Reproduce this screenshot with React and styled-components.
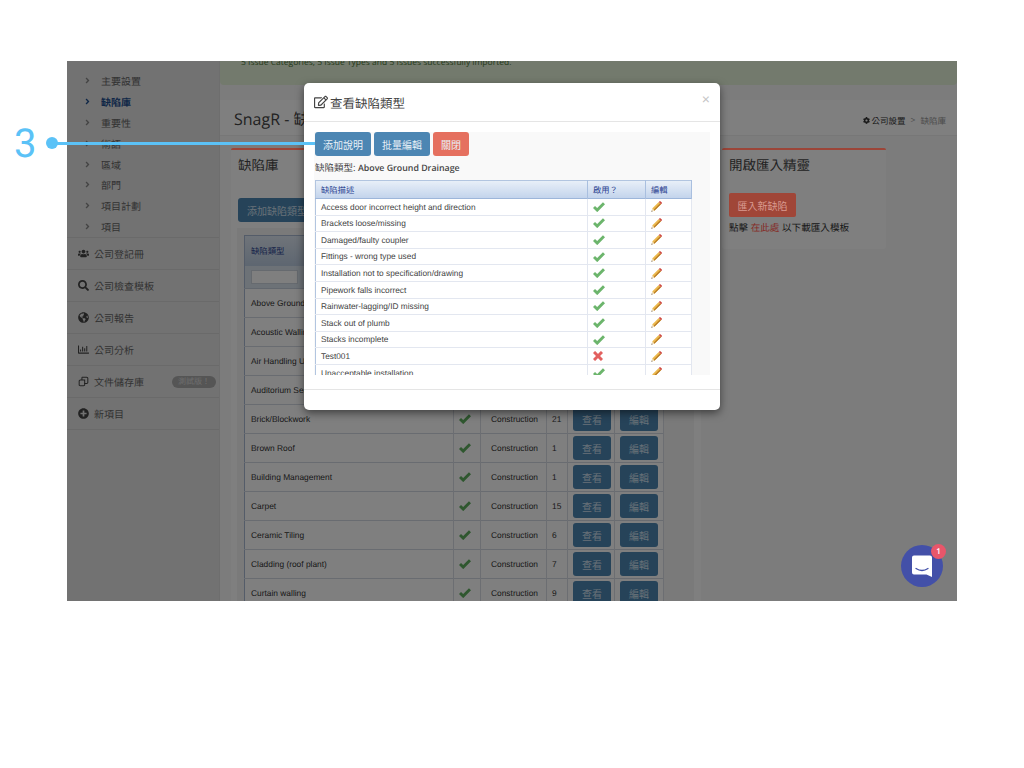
import React from "react";
import styled, { createGlobalStyle } from "styled-components";
import {
  FaAngleRight,
  FaCog,
  FaGlobeAmericas,
  FaPlusCircle,
  FaRegChartBar,
  FaRegEdit,
  FaSearch,
  FaUsers,
} from "react-icons/fa";

const subItems = ["主要設置", "缺陷庫", "重要性", "術語", "區域", "部門", "項目計劃", "項目"];

const navItems = [
  { label: "公司登記冊", icon: <FaUsers /> },
  { label: "公司檢查模板", icon: <FaSearch /> },
  { label: "公司報告", icon: <FaGlobeAmericas /> },
  { label: "公司分析", icon: <FaRegChartBar /> },
  { label: "文件儲存庫", icon: <CopyIcon />, badge: "測試版！" },
  { label: "新項目", icon: <FaPlusCircle /> },
];

const issueTypes = [
  ["Above Ground Drainage", 9],
  ["Acoustic Walling", 4],
  ["Air Handling Unit", 12],
  ["Auditorium Seating", 3],
  ["Brick/Blockwork", 21],
  ["Brown Roof", 1],
  ["Building Management", 1],
  ["Carpet", 15],
  ["Ceramic Tiling", 6],
  ["Cladding (roof plant)", 7],
  ["Curtain walling", 9],
];

const descriptions = [
  ["Access door incorrect height and direction", true],
  ["Brackets loose/missing", true],
  ["Damaged/faulty coupler", true],
  ["Fittings - wrong type used", true],
  ["Installation not to specification/drawing", true],
  ["Pipework falls incorrect", true],
  ["Rainwater-lagging/ID missing", true],
  ["Stack out of plumb", true],
  ["Stacks incomplete", true],
  ["Test001", false],
  ["Unacceptable installation", true],
];

function CopyIcon() {
  return (
    <svg viewBox="0 0 14 14" width="11" height="11" fill="none" stroke="currentColor" strokeWidth="1.3">
      <path d="M5 1.5h6a1.5 1.5 0 0 1 1.5 1.5v5a1.5 1.5 0 0 1-1.5 1.5H8" />
      <path d="M3 5h5.5V11a1.5 1.5 0 0 1-1.5 1.5H3A1.5 1.5 0 0 1 1.5 11V6.5A1.5 1.5 0 0 1 3 5z" />
      <path d="M5 5V1.5" />
    </svg>
  );
}

function TickIcon({ color }) {
  return (
    <svg viewBox="0 0 12 10" width="12" height="10" fill="none" stroke={color} strokeWidth="2.9">
      <path d="M1 5l3.2 3.1L11 1.2" />
    </svg>
  );
}

function CrossIcon() {
  return (
    <svg viewBox="0 0 10 10" width="10" height="10" fill="none" stroke="#e2605f" strokeWidth="3">
      <path d="M1 1l8 8M9 1l-8 8" />
    </svg>
  );
}

function PencilIcon() {
  return (
    <svg viewBox="0 0 11 11" width="11" height="11">
      <path d="M1.2 7.6 7.8 1l2.2 2.2-6.6 6.6z" fill="#ecb94e" />
      <path d="M2.5 8.9 9.1 2.3l.9.9-6.6 6.6z" fill="#b67a24" />
      <path d="M7.8 1 8.6.2a.6.6 0 0 1 .8 0l1.4 1.4a.6.6 0 0 1 0 .8l-.8.8z" fill="#cf4a42" />
      <path d="M1.2 7.6l2.2 2.2-3 1z" fill="#efdcb6" />
      <path d="M.8 9.4l.8.8-1.2.6z" fill="#3d3228" />
    </svg>
  );
}

function ChatIcon() {
  return (
    <svg viewBox="0 0 24 24" width="24" height="24">
      <path d="M4 1.5h16a2 2 0 0 1 2 2v19.5l-5.5-2.5H4a2 2 0 0 1-2-2v-15a2 2 0 0 1 2-2z" fill="#fff" />
      <path d="M6 14.5c3.6 2.4 8.4 2.4 12 0" fill="none" stroke="#3f4da8" strokeWidth="1.3" strokeLinecap="round" />
    </svg>
  );
}

export default function App() {
  return (
    <>
      <GlobalStyle />
      <Page>
        <Frame>
          <Sidebar>
            <SubList>
              {subItems.map((item) => (
                <SubItem key={item} $active={item === "缺陷庫"}>
                  <FaAngleRight />
                  {item}
                </SubItem>
              ))}
            </SubList>
            {navItems.map((item) => (
              <NavItem key={item.label}>
                <NavIcon>{item.icon}</NavIcon>
                {item.label}
                {item.badge && <Badge>{item.badge}</Badge>}
              </NavItem>
            ))}
          </Sidebar>
          <Main>
            <Alert>5 Issue Categories, 5 Issue Types and 5 Issues successfully imported.</Alert>
            <TitleBar>
              <PageTitle>SnagR - 缺陷庫</PageTitle>
              <Breadcrumb>
                <FaCog />
                <span>公司設置</span>
                <Crumb>&gt;</Crumb>
                <Crumb>缺陷庫</Crumb>
              </Breadcrumb>
            </TitleBar>
            <Content>
              <LibraryCard>
                <CardTitle $gap={23}>缺陷庫</CardTitle>
                <AddButton>添加缺陷類型</AddButton>
                <TablePanel>
                  <IssueTable>
                    <colgroup>
                      <Col $w={209} />
                      <Col $w={27} />
                      <Col $w={66} />
                      <Col $w={21} />
                      <Col $w={47} />
                      <Col $w={49} />
                    </colgroup>
                    <thead>
                      <HeadRow>
                        <th>缺陷類型</th>
                        <th>啟用？</th>
                        <th>類別</th>
                        <th>#</th>
                        <th>查看</th>
                        <th>編輯</th>
                      </HeadRow>
                      <FilterRow>
                        <td colSpan="6">
                          <FilterInput />
                        </td>
                      </FilterRow>
                    </thead>
                    <tbody>
                      {issueTypes.map(([name, count]) => (
                        <IssueRow key={name}>
                          <td>{name}</td>
                          <td>
                            <IconCell>
                              <TickIcon color="#5fae5f" />
                            </IconCell>
                          </td>
                          <td>Construction</td>
                          <td>{count}</td>
                          <td>
                            <RowButton>查看</RowButton>
                          </td>
                          <td>
                            <RowButton>編輯</RowButton>
                          </td>
                        </IssueRow>
                      ))}
                    </tbody>
                  </IssueTable>
                </TablePanel>
              </LibraryCard>
              <ImportCard>
                <CardTitle $gap={18}>開啟匯入精靈</CardTitle>
                <ImportButton>匯入新缺陷</ImportButton>
                <ImportNote>
                  點擊 <ImportLink>在此處</ImportLink> 以下載匯入模板
                </ImportNote>
              </ImportCard>
            </Content>
          </Main>
          <Backdrop />
          <Modal>
            <ModalHeader>
              <ModalTitle>
                <FaRegEdit />
                查看缺陷類型
              </ModalTitle>
              <CloseMark>×</CloseMark>
            </ModalHeader>
            <ModalBody>
              <ModalPanel>
                <ModalButtons>
                  <ModalButton $color="#4c86b3">添加說明</ModalButton>
                  <ModalButton $color="#4c86b3">批量編輯</ModalButton>
                  <ModalButton $color="#e5705f">關閉</ModalButton>
                </ModalButtons>
                <TypeLabel>
                  缺陷類型: <strong>Above Ground Drainage</strong>
                </TypeLabel>
                <DescTable>
                  <colgroup>
                    <Col $w={272} />
                    <Col $w={58} />
                    <Col $w={46} />
                  </colgroup>
                  <thead>
                    <DescHead>
                      <th>缺陷描述</th>
                      <th>啟用？</th>
                      <th>編輯</th>
                    </DescHead>
                  </thead>
                  <tbody>
                    {descriptions.map(([text, enabled]) => (
                      <DescRow key={text}>
                        <td>{text}</td>
                        <td>
                          <IconCell>{enabled ? <TickIcon color="#6cb56c" /> : <CrossIcon />}</IconCell>
                        </td>
                        <td>
                          <IconCell>
                            <PencilIcon />
                          </IconCell>
                        </td>
                      </DescRow>
                    ))}
                  </tbody>
                </DescTable>
              </ModalPanel>
            </ModalBody>
            <ModalFooter />
          </Modal>
          <ChatButton>
            <ChatIcon />
            <ChatBadge>1</ChatBadge>
          </ChatButton>
        </Frame>
        <Callout>
          <CalloutNumber>3</CalloutNumber>
          <CalloutDot />
          <CalloutLine />
        </Callout>
      </Page>
    </>
  );
}

const GlobalStyle = createGlobalStyle`
  html, body {
    margin: 0;
    background: #fff;
  }
  * {
    box-sizing: border-box;
  }
  body {
    font-family: "Open Sans", "Noto Sans CJK TC", sans-serif;
    color: #333;
    text-rendering: geometricPrecision;
  }
`;

const Page = styled.div`
  position: relative;
  height: 768px;
  padding: 61px 0 0 67px;
  overflow: hidden;
`;

const Frame = styled.div`
  position: relative;
  display: flex;
  width: 890px;
  height: 540px;
  overflow: hidden;
  background: #f8f8f8;
`;

const Sidebar = styled.nav`
  flex: 0 0 153px;
  background: #e4e4e4;
  border-right: 1px solid #dcdcdc;
`;

const SubList = styled.div`
  padding: 9.5px 0 0;
  border-bottom: 1px solid #d4d4d4;
  height: 177px;
`;

const SubItem = styled.div`
  display: flex;
  align-items: center;
  height: 20.8px;
  padding-left: 16px;
  font-size: 10px;
  color: ${(p) => (p.$active ? "#1f4f8f" : "#666")};
  font-weight: ${(p) => (p.$active ? 700 : 400)};

  svg {
    width: 9px;
    height: 9px;
    margin-right: 9px;
    color: ${(p) => (p.$active ? "#1f4f8f" : "#888")};
  }
`;

const NavItem = styled.div`
  display: flex;
  align-items: center;
  height: 32px;
  padding: 0 3px 0 10px;
  font-size: 10px;
  color: #666;
  border-bottom: 1px solid #d4d4d4;
`;

const NavIcon = styled.span`
  display: flex;
  justify-content: center;
  flex: 0 0 12px;
  margin-right: 5px;
  color: #444;

  svg {
    width: 11px;
    height: 11px;
  }
`;

const Badge = styled.span`
  margin-left: auto;
  padding: 0 6px;
  height: 12px;
  line-height: 12px;
  border-radius: 6px;
  font-size: 8px;
  color: #ddd;
  background: #aaa;
`;

const Main = styled.main`
  flex: 1;
  min-width: 0;
`;

const Alert = styled.div`
  height: 24px;
  overflow: hidden;
  padding: 0 0 0 21px;
  margin-bottom: 15px;
  line-height: 4px;
  font-size: 8.5px;
  color: #4f7a3a;
  background: #e6f4da;
  border-radius: 0 0 4px 4px;
`;

const TitleBar = styled.div`
  display: flex;
  align-items: center;
  justify-content: space-between;
  height: 36px;
  padding: 0 11px 0 14px;
  background: #fff;
  border-bottom: 1px solid #eee;
  margin-bottom: 13px;
`;

const PageTitle = styled.h1`
  margin: 0;
  font-size: 16px;
  font-weight: 400;
  color: #444;
`;

const Breadcrumb = styled.div`
  display: flex;
  align-items: center;
  gap: 3px;
  margin-top: 6px;
  font-size: 8.5px;
  color: #333;

  svg {
    width: 7px;
    height: 7px;
    margin-right: -1px;
  }
`;

const Crumb = styled.span`
  margin-left: 2px;
  color: #999;
`;

const Content = styled.div`
  display: flex;
  align-items: flex-start;
  gap: 21px;
  padding-left: 11px;
`;

const Card = styled.section`
  position: relative;
  background: #fff;
  border-radius: 3px;
  padding: 6px 7px 5px;

  &::before {
    content: "";
    position: absolute;
    top: -1px;
    left: 0;
    right: 0;
    z-index: 2;
    height: 2px;
    border-radius: 2px 2px 0 0;
    background: #9c4538;
  }
`;

const LibraryCard = styled(Card)`
  flex: 0 0 470px;
`;

const ImportCard = styled(Card)`
  flex: 0 0 164px;
  height: 100px;
`;

const CardTitle = styled.h2`
  margin: 0 0 ${(p) => p.$gap}px;
  height: 20px;
  line-height: 20px;
  font-size: 13.5px;
  font-weight: 400;
  color: #444;
`;

const AddButton = styled.button`
  display: block;
  width: 80px;
  height: 24px;
  padding: 0 0 0 9px;
  border: 0;
  border-radius: 3px;
  text-align: left;
  font: inherit;
  font-size: 10px;
  color: #cfe0ee;
  background: #4c86b3;
`;

const TablePanel = styled.div`
  margin: 6px 0 0 -1px;
  padding: 7px 7px 0;
  background: #f4f4f4;
`;

const IssueTable = styled.table`
  width: 419px;
  table-layout: fixed;
  border-collapse: collapse;
  border: 1px solid #a9b9d2;
  background: #fff;
  font-family: "Liberation Sans", "Noto Sans CJK TC", sans-serif;
  font-size: 8.4px;
`;

const Col = styled.col`
  width: ${(p) => p.$w}px;
`;

const HeadRow = styled.tr`
  height: 30px;
  background: linear-gradient(#dfe8f3, #bccde2);

  th {
    padding: 0 6px;
    text-align: left;
    font-weight: 400;
    color: #2c4391;
  }
`;

const FilterRow = styled.tr`
  height: 23px;
  background: #dbe4ef;
  border-bottom: 1px solid #c4cedc;

  td {
    padding: 0 6px;
  }
`;

const FilterInput = styled.input`
  display: block;
  width: 47px;
  height: 14px;
  padding: 0;
  border: 1px solid #ccd4df;
  background: #fff;
`;

const IssueRow = styled.tr`
  height: 29px;
  border-bottom: 1px solid #d2d8e2;
  color: #333;

  td {
    padding: 0 5px;
    border-right: 1px solid #d8dce4;
    overflow: hidden;
    white-space: nowrap;
  }

  td:first-child {
    padding-left: 6px;
  }

  td:nth-child(3) {
    padding-left: 10px;
  }
`;

const RowButton = styled.button`
  display: block;
  width: 38px;
  height: 24px;
  padding: 0;
  border: 0;
  border-radius: 3px;
  font: inherit;
  font-size: 10px;
  color: #cfe0ee;
  background: #4c86b3;
`;

const IconCell = styled.span`
  display: flex;
  align-items: center;
`;

const ImportButton = styled.button`
  position: relative;
  z-index: 2;
  display: block;
  width: 67px;
  height: 24px;
  margin-bottom: 3px;
  padding: 0;
  border: 0;
  border-radius: 2px;
  font: inherit;
  font-size: 10px;
  color: #d99a90;
  background: #a04638;
`;

const ImportNote = styled.p`
  margin: 0;
  font-size: 9.6px;
  color: #333;
`;

const ImportLink = styled.a`
  position: relative;
  z-index: 2;
  color: #852a26;
`;

const Backdrop = styled.div`
  position: absolute;
  inset: 0;
  z-index: 1;
  background: rgba(0, 0, 0, 0.5);
`;

const Modal = styled.div`
  position: absolute;
  top: 22px;
  left: 237px;
  z-index: 3;
  width: 416px;
  height: 327px;
  display: flex;
  flex-direction: column;
  border-radius: 5px;
  background: #fff;
  box-shadow: 0 3px 9px rgba(0, 0, 0, 0.5);
`;

const ModalHeader = styled.header`
  display: flex;
  align-items: center;
  justify-content: space-between;
  height: 39px;
  padding: 0 10px;
  border-bottom: 1px solid #e5e5e5;
`;

const ModalTitle = styled.h3`
  display: flex;
  align-items: center;
  gap: 2px;
  margin: 0;
  font-size: 12.5px;
  font-weight: 400;
  color: #444;

  svg {
    width: 14px;
    height: 14px;
  }
`;

const CloseMark = styled.span`
  font-family: "Liberation Sans", sans-serif;
  font-size: 14px;
  color: #c4c4c4;
  margin-top: -6px;
`;

const ModalBody = styled.div`
  flex: 0 0 268px;
  padding: 10px 10px 0;
  border-bottom: 1px solid #e5e5e5;
`;

const ModalPanel = styled.div`
  height: 243px;
  overflow: hidden;
  padding: 0 1px;
  background: #f9f9f9;
`;

const ModalButtons = styled.div`
  display: flex;
  gap: 3px;
  margin-bottom: 5px;
`;

const ModalButton = styled.button`
  height: 24px;
  padding: 0 8px;
  border: 0;
  border-radius: 3px;
  font: inherit;
  font-size: 10px;
  color: #e8f0f7;
  background: ${(p) => p.$color};
`;

const TypeLabel = styled.div`
  height: 14px;
  line-height: 14px;
  margin-bottom: 5px;
  font-size: 9.5px;
  color: #444;

  strong {
    font-size: 8.8px;
    font-weight: 600;
  }
`;

const DescTable = styled.table`
  width: 376px;
  table-layout: fixed;
  border-collapse: collapse;
  border: 1px solid #b2c5e0;
  background: #fff;
  font-family: "Liberation Sans", "Noto Sans CJK TC", sans-serif;
  font-size: 8.3px;
`;

const DescHead = styled.tr`
  height: 18px;
  background: linear-gradient(#e8eff8, #c3d4ec);
  border-bottom: 1px solid #9db6da;

  th {
    padding: 0 5px;
    text-align: left;
    font-weight: 400;
    color: #2c4391;
    border-right: 1px solid #a9bfdf;
  }
`;

const DescRow = styled.tr`
  height: 16.6px;
  border-bottom: 1px solid #e3e7f0;
  color: #444;

  td {
    padding: 0 5px;
    border-right: 1px solid #e3e7f0;
    line-height: 1;
  }
`;

const ModalFooter = styled.footer`
  flex: 1;
`;

const ChatButton = styled.div`
  position: absolute;
  left: 834px;
  top: 484px;
  z-index: 3;
  display: flex;
  align-items: center;
  justify-content: center;
  width: 42px;
  height: 42px;
  border-radius: 50%;
  background: #4350a8;
`;

const ChatBadge = styled.span`
  position: absolute;
  top: -1px;
  right: -3px;
  width: 15px;
  height: 15px;
  border-radius: 50%;
  text-align: center;
  line-height: 15px;
  font-size: 8px;
  font-weight: 600;
  color: #fff;
  background: #e9566a;
`;

const Callout = styled.div`
  position: absolute;
  top: 122px;
  left: 14px;
  z-index: 5;
  display: flex;
  align-items: center;
  width: 301px;
  height: 42px;
  pointer-events: none;
`;

const CalloutNumber = styled.span`
  flex: 0 0 32px;
  margin-top: 2px;
  font-family: "Roboto", "Liberation Sans", sans-serif;
  font-size: 40px;
  font-weight: 400;
  line-height: 42px;
  color: #5bc2f7;
`;

const CalloutDot = styled.span`
  flex: 0 0 12px;
  height: 12px;
  border-radius: 50%;
  background: #5bc2f7;
`;

const CalloutLine = styled.span`
  flex: 1;
  height: 3px;
  margin-left: -6px;
  background: #5bc2f7;
`;
